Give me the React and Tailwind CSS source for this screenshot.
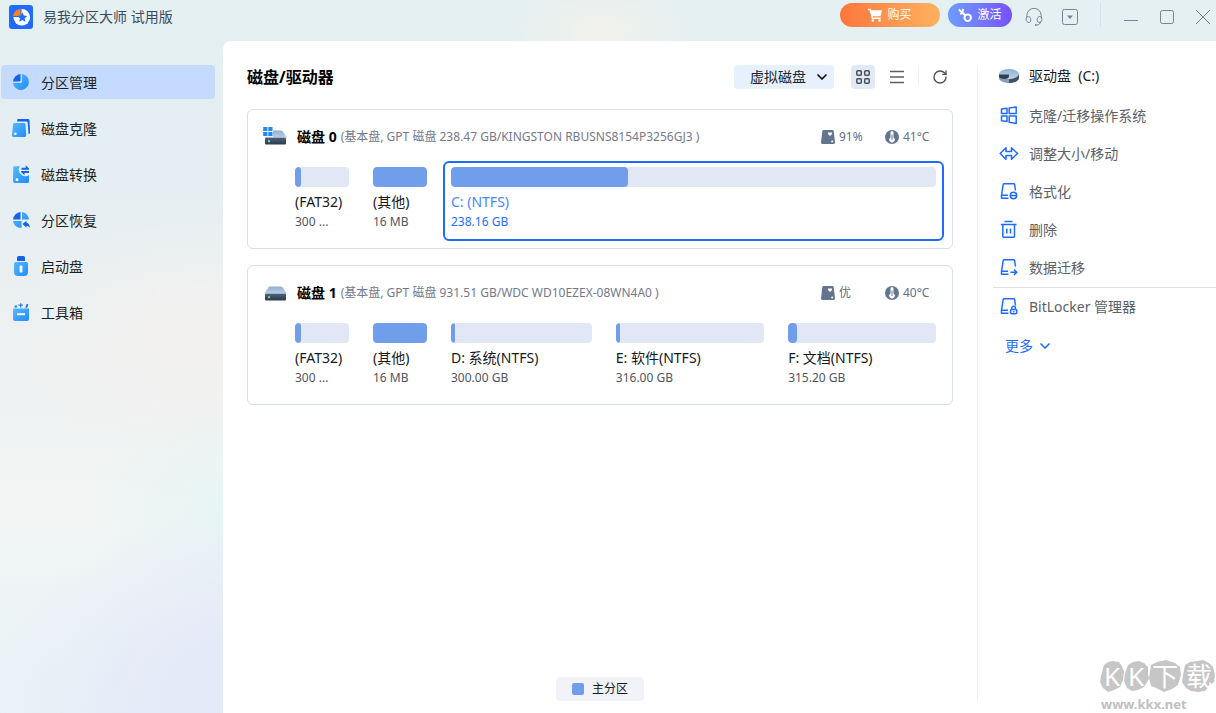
import { useState } from "react";
import { ChevronDown, RotateCw } from "lucide-react";
import clsx from "clsx";

const DISKS = [
  {
    id: 0,
    name: "磁盘 0",
    info: "(基本盘, GPT 磁盘 238.47 GB/KINGSTON RBUSNS8154P3256GJ3 )",
    system: true,
    health: "91%",
    temperature: "41°C",
    partitions: [
      { id: "0-1", label: "(FAT32)", size: "300 ...", used: 11, small: true },
      { id: "0-2", label: "(其他)", size: "16 MB", used: 100, small: true },
      { id: "c", label: "C: (NTFS)", size: "238.16 GB", used: 36.5, weight: 238 }
    ]
  },
  {
    id: 1,
    name: "磁盘 1",
    info: "(基本盘, GPT 磁盘 931.51 GB/WDC WD10EZEX-08WN4A0 )",
    system: false,
    health: "优",
    temperature: "40°C",
    partitions: [
      { id: "1-1", label: "(FAT32)", size: "300 ...", used: 11, small: true },
      { id: "1-2", label: "(其他)", size: "16 MB", used: 100, small: true },
      { id: "d", label: "D: 系统(NTFS)", size: "300.00 GB", used: 3, weight: 300 },
      { id: "e", label: "E: 软件(NTFS)", size: "316.00 GB", used: 3, weight: 316 },
      { id: "f", label: "F: 文档(NTFS)", size: "315.20 GB", used: 6, weight: 315 }
    ]
  }
];

const NAV_ITEMS = [
  { label: "分区管理", icon: PieIcon },
  { label: "磁盘克隆", icon: CloneIcon },
  { label: "磁盘转换", icon: ConvertIcon },
  { label: "分区恢复", icon: RecoverIcon },
  { label: "启动盘", icon: UsbIcon },
  { label: "工具箱", icon: ToolboxIcon }
];

const ACTIONS = [
  { label: "克隆/迁移操作系统", icon: WindowsIcon },
  { label: "调整大小/移动", icon: ResizeIcon },
  { label: "格式化", icon: FormatIcon },
  { label: "删除", icon: TrashIcon },
  { label: "数据迁移", icon: MigrateIcon }
];

function LogoIcon() {
  return (
    <svg viewBox="0 0 24 24" className="size-6">
      <rect width="24" height="24" rx="3" fill="#1f6bff" />
      <circle cx="12.8" cy="12.3" r="8.3" fill="#fff" />
      <path d="M12 11.500V3.500A8.500 8.500 0 0 0 3.500 11.500Z" fill="#f5821f" stroke="#1f6bff" strokeWidth="1" />
      <path
        d="m13.300 7.300 1.500 3.100 3.400.500-2.500 2.400.6 3.400-3-1.600-3 1.600.6-3.400-2.500-2.400 3.400-.5Z"
        fill="#1f6bff"
      />
    </svg>
  );
}

function GradientDefs() {
  return (
    <svg className="absolute size-0" aria-hidden="true">
      <defs>
        <linearGradient id="blue" x1="0" y1="0" x2="1" y2="1">
          <stop offset="0" stopColor="#5bb8ff" />
          <stop offset="1" stopColor="#1c8dff" />
        </linearGradient>
        <linearGradient id="steel" x1="0" y1="0" x2="0" y2="1">
          <stop offset="0" stopColor="#8fb0d6" />
          <stop offset="1" stopColor="#c3d2e5" />
        </linearGradient>
        <linearGradient id="slate" x1="0" y1="0" x2="0" y2="1">
          <stop offset="0" stopColor="#4f627a" />
          <stop offset="1" stopColor="#2b3a4e" />
        </linearGradient>
      </defs>
    </svg>
  );
}

function PieIcon() {
  return (
    <svg viewBox="0 0 18 18" className="size-[18px]">
      <path d="M10 1A8 8 0 1 1 1 10H8.500a1.500 1.500 0 0 0 1.500-1.500Z" fill="url(#blue)" />
      <path d="M8.500 1.100V7a1.500 1.500 0 0 1-1.500 1.500H1A8 8 0 0 1 8.500 1.100Z" fill="#1464eb" />
    </svg>
  );
}

function CloneIcon() {
  return (
    <svg viewBox="0 0 18 18" className="size-[18px]">
      <path d="M5.500 0H16a1.500 1.500 0 0 1 1.500 1.400L18 13.500a1.500 1.500 0 0 1-1.500 1.500L15.700 3.500a1.200 1.200 0 0 0-1.200-1H5Z" fill="#1464eb" />
      <path d="M2.500 4H12a1.500 1.500 0 0 1 1.500 1.400l.7 11A1.500 1.500 0 0 1 12.700 18H1.500A1.500 1.500 0 0 1 0 16.400l1-11A1.500 1.500 0 0 1 2.500 4Z" fill="url(#blue)" />
      <circle cx="3.300" cy="14.800" r="1.300" fill="#fff" />
    </svg>
  );
}

function ConvertIcon() {
  return (
    <svg viewBox="0 0 18 18" className="size-[18px]">
      <path d="M2.500 1.200H8a5.500 5.500 0 0 0 1 8 5.500 5.500 0 0 0 8 .8V16.500A1.500 1.500 0 0 1 15.500 18H2.500A1.500 1.500 0 0 1 1 16.400L1.200 2.500A1.300 1.300 0 0 1 2.500 1.200Z" fill="url(#blue)" />
      <circle cx="5" cy="14.700" r="1.400" fill="#fff" />
      <path d="M9.500 2.700h4.200V.200L17 3.500v1.200H9.500ZM17 6H9v1l3.500 3.300V8H17Z" fill="#1464eb" />
    </svg>
  );
}

function RecoverIcon() {
  return (
    <svg viewBox="0 0 18 18" className="size-[18px]">
      <path d="M10 1A8 8 0 0 1 17 8.500H10ZM1 10h8.500v7A8 8 0 0 1 1 10Z" fill="url(#blue)" />
      <path d="M8.500 1.100V8.500H1A8 8 0 0 1 8.500 1.100Z" fill="#1464eb" />
      <path d="m10.500 13 4-3.300v2c2 .3 3.300 2.300 3.300 5-1-1.400-2-1.800-3.300-1.800v1.800Z" fill="#1464eb" />
    </svg>
  );
}

function UsbIcon() {
  return (
    <svg viewBox="0 0 18 20" className="h-5 w-[18px]">
      <path d="M5 5V1.500A1.500 1.500 0 0 1 6.500 0h5A1.500 1.500 0 0 1 13 1.500V5Z" fill="#1464eb" />
      <path d="M3.500 6h11A1.500 1.500 0 0 1 16 7.500V16a4 4 0 0 1-4 4H6a4 4 0 0 1-4-4V7.500A1.500 1.500 0 0 1 3.500 6Z" fill="url(#blue)" />
      <rect x="7.600" y="9.500" width="2.800" height="7" rx="1" fill="#fff" />
    </svg>
  );
}

function ToolboxIcon() {
  return (
    <svg viewBox="0 0 18 18" className="size-[18px]">
      <path d="M1 5.500h16v10.500a2 2 0 0 1-2 2H3a2 2 0 0 1-2-2Z" fill="url(#blue)" />
      <path d="M5 11.200h8" stroke="#fff" strokeWidth="2" />
      <path d="m13.300 4.800 1.500-4 1.500.7-1.200 3.300Z" fill="#1464eb" />
      <path d="M2.500 3.500h2.600M3.800 2.300v2.500M6.500 2.200h4.400M8.700.200v4.200" stroke="#2b84f5" strokeWidth="1.300" />
    </svg>
  );
}

function DiskIcon({ system }) {
  return (
    <svg viewBox="0 0 24 20" className="h-5 w-6">
      <path d="M7 3.500h11a2 2 0 0 1 1.300.5l4 5.500v2H2v-2l3.700-5.500A2 2 0 0 1 7 3.500Z" fill="url(#steel)" />
      <rect x="2" y="10.800" width="21" height="6.700" rx="1" fill="url(#slate)" />
      <rect x="5" y="13.200" width="2" height="2" fill="#74e08a" />
      {system && (
        <>
          <path d="M0 0h10v9.800H0Z" fill="#fff" />
          <path d="M.200 0h4.200v4h-4.200zM5.300 0h4.200v4h-4.200zM.200 5h4.200v4h-4.200zM5.300 5h4.200v4h-4.200z" fill="#2288f7" />
        </>
      )}
    </svg>
  );
}

function VolumeIcon() {
  return (
    <svg viewBox="0 0 20 14" className="h-[14px] w-5">
      <path d="M0 5v4c0 2.800 4.500 5 10 5s10-2.200 10-5V5Z" fill="#8d9db3" />
      <ellipse cx="10" cy="5" rx="10" ry="5" fill="url(#steel)" />
      <path d="M0 5.500h10V8L8 9.800C3 10.300 0 8.800 0 8Z" fill="#2f4056" />
      <path d="M10 10.300C15 10.200 19 8 20 5.500v3.300c0 2.600-4 5-10 5.200Z" fill="#3f5068" />
    </svg>
  );
}

function HealthIcon() {
  return (
    <svg viewBox="0 0 14 14" className="size-[14px]">
      <path d="M2.500 0h9A1.300 1.300 0 0 1 12.700 1L14 12.500A1.400 1.400 0 0 1 12.700 14H1.300A1.400 1.400 0 0 1 0 12.500L1.300 1A1.300 1.300 0 0 1 2.500 0Z" fill="#63748f" />
      <path d="M9 6 7 4a1.200 1.200 0 0 1 2-1.300A1.200 1.200 0 0 1 11 4Z" fill="#fff" />
      <circle cx="11.200" cy="11.500" r="1" fill="#fff" />
    </svg>
  );
}

function TemperatureIcon() {
  return (
    <svg viewBox="0 0 14 14" className="size-[14px]">
      <circle cx="7" cy="7" r="7" fill="#63748f" />
      <path d="M5.500 2.500a1.500 1.500 0 0 1 3 0v5a2.700 2.700 0 1 1-3 0Z" fill="#fff" />
      <path d="M7 4.500v5.500" stroke="#63748f" strokeWidth="1" />
    </svg>
  );
}

function LineIcon({ children }) {
  return (
    <svg
      viewBox="0 0 20 20"
      className="size-5 shrink-0"
      fill="none"
      stroke="#1f6bff"
      strokeWidth="1.500"
      strokeLinejoin="round"
    >
      {children}
    </svg>
  );
}

function WindowsIcon() {
  return (
    <LineIcon>
      <path d="M2.500 3 8 2.300V7.500H2.500ZM10.200 2 17.200 1V7.500H10.200ZM2.500 10H8v5.500L2.500 14.700ZM10.200 10h7v7.500l-7-1.200Z" />
    </LineIcon>
  );
}

function ResizeIcon() {
  return (
    <LineIcon>
      <path d="M1.200 9.500 7 3.800V7.500H12.500V3.800L18.500 9.500 12.500 15.200V11.500H7V15.200Z" />
    </LineIcon>
  );
}

function DriveOutline() {
  return <path d="M16.500 8.500 15.600 2.500a.8.800 0 0 0-.8-.7H5a.8.800 0 0 0-.8.700L2.500 13.300V16.300H9.500M2.500 13.300H9" />;
}

function FormatIcon() {
  return (
    <LineIcon>
      <DriveOutline />
      <circle cx="14.500" cy="13.500" r="3.200" />
      <path d="M12 13.500h5" />
    </LineIcon>
  );
}

function TrashIcon() {
  return (
    <LineIcon>
      <path d="M5.500 1.500h8M1.800 4.500h15.700M3.800 4.500V16.500a.8.800 0 0 0 .8.700H14.700a.8.800 0 0 0 .8-.700V4.500M7.800 8.500v5M11.500 8.500v5" />
    </LineIcon>
  );
}

function MigrateIcon() {
  return (
    <LineIcon>
      <DriveOutline />
      <path d="M11.500 14.300h6M15 11.500l2.800 2.800L15 17" />
    </LineIcon>
  );
}

function BitLockerIcon() {
  return (
    <LineIcon>
      <DriveOutline />
      <rect x="11.500" y="12.500" width="6.300" height="4.300" rx="1.500" />
      <path d="M12.800 12.300v-1.300a1.800 1.800 0 0 1 3.700 0v1.300M14.700 14v1.500" />
    </LineIcon>
  );
}

function CartIcon() {
  return (
    <svg viewBox="0 0 14 14" className="size-[14px]" fill="#fff">
      <path d="M0 .800h2.700l.5 1.500H14l-1.500 6H4.800l.3 1.200h7.600v1.500H3.800L1.600 2.300H0Z" />
      <circle cx="4.800" cy="12.500" r="1.300" />
      <circle cx="11.500" cy="12.500" r="1.300" />
    </svg>
  );
}

function KeyIcon() {
  return (
    <svg viewBox="0 0 14 14" className="size-[14px]" fill="none" stroke="#fff" strokeWidth="2">
      <circle cx="9.700" cy="9.700" r="3.200" />
      <path d="M7.500 7.500.800 1.500M2.300 6.300 4.600 4.500M5.300.8 4.300 4.500" />
    </svg>
  );
}

function HeadsetIcon() {
  return (
    <svg viewBox="0 0 18 18" className="size-[18px]" fill="none" stroke="#76829a">
      <path d="M1.800 10V7.500a7.200 7.200 0 0 1 14.400 0V10M15.800 13.500c-.5 2.200-2 3.500-4.300 3.700" />
      <path d="M3.300 8.500c1.500 0 2.500 1.500 2.500 3.300s-1 2.700-2 2.700-2.700-1-2.700-3.200 1-2.800 2.200-2.800ZM14.700 8.500c-1.500 0-2.500 1.500-2.500 3.300s1 2.700 2 2.700 2.700-1 2.700-3.200-1-2.800-2.200-2.800Z" />
      <circle cx="10.800" cy="17" r=".9" fill="#76829a" stroke="none" />
    </svg>
  );
}

function TitleBar() {
  return (
    <header className="flex h-[41px] items-start justify-between">
      <div className="flex items-center gap-[10px] pt-[5px] pl-[9px]">
        <LogoIcon />
        <h1 className="text-sm text-[#3b4a5e]">易我分区大师 试用版</h1>
      </div>
      <div className="flex items-start pt-[3px] pr-[3px]">
        <button className="mr-2 flex h-6 w-[100px] items-center justify-center gap-[5px] rounded-full bg-linear-to-r from-[#ff763c] to-[#ffb15f] text-xs text-white">
          <CartIcon />
          购买
        </button>
        <button className="flex h-6 w-16 items-center justify-center gap-[5px] rounded-full bg-linear-to-r from-[#6d9bff] to-[#7650ff] text-xs text-white">
          <KeyIcon />
          激活
        </button>
        <div className="flex gap-[18px] pt-[5px] pl-[13px]">
          <button aria-label="客服">
            <HeadsetIcon />
          </button>
          <button aria-label="菜单">
            <svg viewBox="0 0 18 18" className="size-[18px]" fill="none" stroke="#76829a">
              <rect x="1.500" y="1.500" width="15" height="15" rx="2" />
              <path d="M6 7.500 9 11l3-3.500Z" fill="#76829a" stroke="none" />
            </svg>
          </button>
        </div>
        <span className="ml-[21px] h-6 w-px bg-[#d6dfe9]" />
        <div className="flex gap-4 pt-1 pl-5">
          <button aria-label="最小化">
            <svg viewBox="0 0 20 20" className="size-5" fill="none" stroke="#76829a">
              <path d="M3 13.500h14" />
            </svg>
          </button>
          <button aria-label="最大化">
            <svg viewBox="0 0 20 20" className="size-5" fill="none" stroke="#76829a">
              <rect x="3.500" y="3.500" width="13" height="13" rx="2" />
            </svg>
          </button>
          <button aria-label="关闭">
            <svg viewBox="0 0 20 20" className="size-5" fill="none" stroke="#76829a">
              <path d="m3 3 14 14M17 3 3 17" />
            </svg>
          </button>
        </div>
      </div>
    </header>
  );
}

function Sidebar() {
  const [active, setActive] = useState("分区管理");

  return (
    <nav className="flex w-[223px] shrink-0 flex-col gap-3 pt-6 pr-2 pl-px">
      {NAV_ITEMS.map(({ label, icon: Icon }) => (
        <button
          key={label}
          onClick={() => setActive(label)}
          className={clsx(
            "flex h-[34px] items-center gap-[11px] rounded pl-[11px] text-sm text-[#1b1f26]",
            active === label && "bg-[#c5daff]"
          )}
        >
          <Icon />
          <span className="pt-0.5">{label}</span>
        </button>
      ))}
    </nav>
  );
}

function Partition({ partition, selected, onSelect }) {
  return (
    <button
      onClick={onSelect}
      style={partition.small ? undefined : { flexGrow: partition.weight }}
      className={clsx(
        "min-w-0 rounded-md border-2 px-[6px] pt-1 pb-[7px] text-left whitespace-nowrap",
        selected ? "border-[#1f6bff]" : "border-transparent",
        partition.small ? "w-[70px] shrink-0" : "basis-0"
      )}
    >
      <span className="block h-5 overflow-hidden rounded bg-[#e1e7f5]">
        <span className="block h-full rounded bg-[#719eeb]" style={{ width: `${partition.used}%` }} />
      </span>
      <span className={clsx("mt-[5px] block text-sm leading-5", selected ? "text-[#4a86ff]" : "text-[#16181d]")}>
        {partition.label}
      </span>
      <span className={clsx("block text-xs leading-5", selected ? "text-[#1f6bff]" : "text-[#51555e]")}>
        {partition.size}
      </span>
    </button>
  );
}

function DiskCard({ disk, selected, onSelect }) {
  return (
    <section className="rounded-md border border-[#d8deeb] pt-[15px] pb-[7px]">
      <div className="flex h-6 items-center pr-[19px] pl-[15px]">
        <DiskIcon system={disk.system} />
        <h3 className="ml-[10px] text-sm font-bold text-black">{disk.name}</h3>
        <p className="ml-1 flex-1 truncate text-xs text-[#74798a]">{disk.info}</p>
        <span className="flex w-16 items-center gap-1 text-xs text-[#63708a]">
          <HealthIcon />
          {disk.health}
        </span>
        <span className="flex w-12 items-center gap-1 text-xs text-[#63708a]">
          <TemperatureIcon />
          {disk.temperature}
        </span>
      </div>
      <div className="mt-3 flex gap-2 pr-2 pl-[39px]">
        {disk.partitions.map((partition) => (
          <Partition
            key={partition.id}
            partition={partition}
            selected={selected === partition.id}
            onSelect={() => onSelect(partition.id)}
          />
        ))}
      </div>
    </section>
  );
}

function Toolbar() {
  return (
    <div className="flex h-6 items-center">
      <h2 className="flex-1 text-base font-bold text-black">磁盘/驱动器</h2>
      <div className="relative flex">
        <select
          aria-label="磁盘类型"
          className="h-6 w-[100px] appearance-none rounded bg-[#e6f1fd] pl-4 text-sm text-[#20242c] outline-none"
        >
          <option>虚拟磁盘</option>
        </select>
        <ChevronDown className="pointer-events-none absolute top-1 right-1 size-4 text-black" strokeWidth={2.5} />
      </div>
      <button aria-label="网格视图" className="ml-[17px] flex size-6 items-center justify-center rounded bg-[#e0eaf7]">
        <svg viewBox="0 0 14 14" className="size-[14px]" fill="none" stroke="#4b4f58" strokeWidth="1.500">
          <rect x=".8" y=".8" width="4.500" height="4.500" rx="1" />
          <rect x="8.700" y=".8" width="4.500" height="4.500" rx="1" />
          <rect x=".8" y="8.700" width="4.500" height="4.500" rx="1" />
          <rect x="8.700" y="8.700" width="4.500" height="4.500" rx="1" />
        </svg>
      </button>
      <button aria-label="列表视图" className="ml-[15px]">
        <svg viewBox="0 0 14 14" className="size-[14px]" fill="none" stroke="#5a5d64" strokeWidth="1.500">
          <path d="M0 1.500h14M0 7h14M0 12.500h14" />
        </svg>
      </button>
      <span className="ml-[14px] h-5 w-px self-start bg-[#eceef2]" />
      <button aria-label="刷新" className="mr-[5px] ml-[13px]">
        <RotateCw className="size-4 text-[#4b4f58]" strokeWidth={2} />
      </button>
    </div>
  );
}

function ActionButton({ label, icon: Icon }) {
  return (
    <button className="flex h-[38px] items-center gap-[10px] pl-[21px] text-sm text-[#5c6068]">
      <Icon />
      {label}
    </button>
  );
}

function ActionPanel() {
  return (
    <aside className="mt-6 mb-3 flex w-[239px] shrink-0 flex-col border-l border-[#eceef2]">
      <h2 className="mb-[10px] flex h-[22px] items-center gap-[10px] pl-[21px] text-sm text-[#16181d]">
        <VolumeIcon />
        <span>驱动盘&nbsp; (C:)</span>
      </h2>
      {ACTIONS.map((action) => (
        <ActionButton key={action.label} {...action} />
      ))}
      <hr className="ml-[15px] border-[#dfe1e5]" />
      <ActionButton label="BitLocker 管理器" icon={BitLockerIcon} />
      <button className="flex h-10 items-center gap-1 pl-[27px] text-sm text-[#1f6bff]">
        更多
        <ChevronDown className="size-4" strokeWidth={2.5} />
      </button>
    </aside>
  );
}

function Watermark() {
  return (
    <div className="pointer-events-none absolute right-0 bottom-0">
      <svg viewBox="0 0 118 65" className="h-[65px] w-[118px]">
        <g fill="#c6c6c6">
          <path d="m6 17 4-3 5-1 6 1 3 4 2 6-1 8-3 7-6 3-6 2-5-4-3-6 1-6Z" />
          <path d="m30 17 5-3 6-1 5 2 4 4v7l1 5-5 8-6 3-6 1-5-3-3-7 1-7Z" />
          <path d="m53 17 6-3 9-2 9 3 5 4 1 8-3 10-6 4-8 3-8-4-5-2-2-8Z" />
          <path d="m87 17 5-3 7-1 6-1 6 3 4 4 2 8-1 7-5 4-4 5-7 1-7-1-5-3-4-6 1-7Z" />
        </g>
        <g fill="#fff" className="font-['Noto_Sans','Noto_Sans_CJK_SC',sans-serif]" fontSize="26">
          <text x="6" y="38">K</text>
          <text x="30" y="38">K</text>
          <text x="54" y="38">下</text>
          <text x="88" y="38">载</text>
        </g>
        <text x="3" y="61" fill="#c0c0c0" className="font-['Noto_Sans',sans-serif]" fontSize="13" fontWeight="700">
          www.kkx.net
        </text>
      </svg>
    </div>
  );
}

export default function App() {
  const [selected, setSelected] = useState("c");

  return (
    <div className="relative flex min-h-screen flex-col bg-[radial-gradient(ellipse_100px_50px_at_600px_30px,#f1f1ea_0,transparent_100%),radial-gradient(ellipse_260px_190px_at_250px_700px,#e5eaf8_35%,transparent_100%),radial-gradient(ellipse_150px_110px_at_240px_510px,#e5f5f4_0,transparent_100%),radial-gradient(ellipse_190px_120px_at_200px_340px,#f3f1ef_0,transparent_100%),linear-gradient(180deg,#e4f0f2_0,#e5eef2_25%,#eef1f1_50%,#f2f5f4_72%,#e8f3f7_100%)] font-['Noto_Sans','Noto_Sans_CJK_SC',sans-serif]">
      <GradientDefs />
      <TitleBar />
      <div className="flex flex-1">
        <Sidebar />
        <div className="flex min-w-0 flex-1 rounded-tl-lg bg-white">
          <main className="flex min-w-0 flex-1 flex-col px-6 pt-6 pb-3">
            <Toolbar />
            <div className="mt-5 flex flex-col gap-4">
              {DISKS.map((disk) => (
                <DiskCard key={disk.id} disk={disk} selected={selected} onSelect={setSelected} />
              ))}
            </div>
            <div className="mt-auto flex h-6 items-center gap-2 self-center rounded bg-[#f1f3f8] px-4 text-xs text-[#16181d]">
              <span className="size-3 rounded-xs bg-[#719eeb]" />
              主分区
            </div>
          </main>
          <ActionPanel />
        </div>
      </div>
      <Watermark />
    </div>
  );
}
